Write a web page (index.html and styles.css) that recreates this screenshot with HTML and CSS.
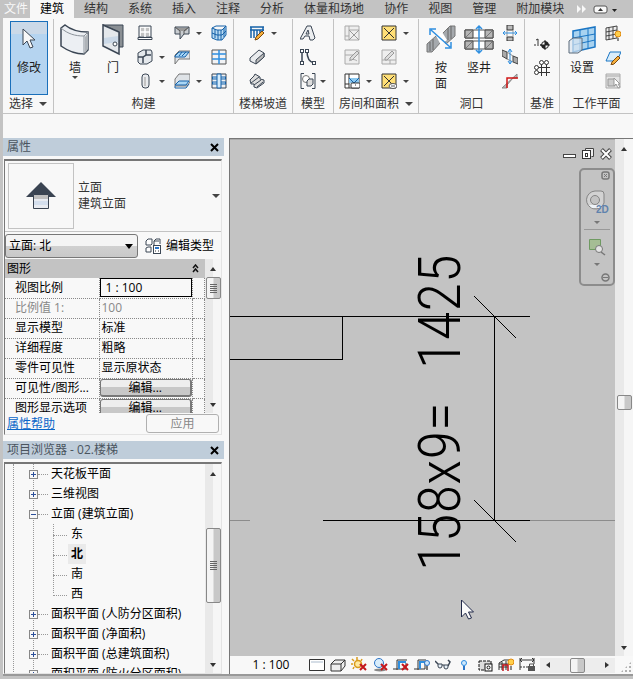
FILE: index.html
```html
<!DOCTYPE html>
<html lang="zh-CN">
<head>
    <meta charset="UTF-8">
    <meta name="viewport" content="width=device-width, initial-scale=1.0">
    <title>02.楼梯 - 立面: 北</title>
    <link rel="stylesheet" href="styles.css">
</head>
<body>
<div class="app">
    <nav class="tabs">
        <button class="tab file">文件</button>
        <button class="tab active">建筑</button>
        <button class="tab">结构</button>
        <button class="tab">系统</button>
        <button class="tab">插入</button>
        <button class="tab">注释</button>
        <button class="tab">分析</button>
        <button class="tab">体量和场地</button>
        <button class="tab">协作</button>
        <button class="tab">视图</button>
        <button class="tab">管理</button>
        <button class="tab">附加模块</button>
        <button class="tab-extra" aria-label="更多选项卡"><svg width="11" height="8"><path d="M1 0l4 4-4 4zM6 0l4 4-4 4z" fill="#f8f8f8"/></svg></button>
        <button class="tab-extra" aria-label="最小化功能区"><svg width="24" height="9"><rect x="1" y="1" width="13" height="7" rx="2" fill="#f8f8f8" stroke="#555"/><path d="M5 6l2.500-3L10 6z" fill="#333"/><path d="M19 4h5l-2.500 3z" fill="#222"/></svg></button>
    </nav>

    <header class="ribbon">
        <section class="panel">
            <div class="tools select-tools">
                <button class="big active">
                    <svg width="16" height="22" viewBox="0 0 16 22"><path d="M2 1v16l4-4 3 7 3-1-3-7h5z" fill="#f8f8f8" stroke="#3b4654"/></svg>
                    <span>修改</span>
                </button>
            </div>
            <h2>选择 <i class="caret large"></i></h2>
        </section>

        <section class="panel">
            <div class="tools">
                <button class="big">
                    <svg width="30" height="32" viewBox="0 0 30 32"><path d="M1 4l4-3c6 5 14 7 23 7v18l-4 4C16 30 8 27 1 22z" fill="#eceff3" stroke="#3b4654" stroke-width="1.500"/><path d="M1 4c7 6 14 8 23 8l4-4M24 12v18" fill="none" stroke="#8b929a"/><path d="M25 13l3-4v16l-3 4z" fill="#aeb3b8"/></svg>
                    <span>墙</span><i class="caret"></i>
                </button>
                <button class="big">
                    <svg width="22" height="32" viewBox="0 0 22 32"><path d="M1 1h20v22h-4V8z" fill="#8a8f94" stroke="#3b4654"/><path d="M1 1l16 7v22L1 22z" fill="#e4e8ec" stroke="#3b4654" stroke-width="1.500"/><path d="M2 14l14-2v6L2 20z" fill="#cbd9e8"/><circle cx="13" cy="20" r="2" fill="#fff" stroke="#3b4654"/></svg>
                    <span>门</span>
                </button>
                <div class="small-grid three">
                    <button aria-label="窗"><svg class="ico" viewBox="0 0 16 16"><path d="M2 1h12v11H2z" fill="#f8f8f8" stroke="#3b4654"/><path d="M4 3h8v8H4z" fill="#c3c3c3"/><path d="M8 2v10M3 7h10" stroke="#fff" stroke-width="1.500"/><path d="M1 12.500h14v2H1z" fill="#fff" stroke="#3b4654"/></svg></button>
                    <button aria-label="屋顶"><svg class="ico" viewBox="0 0 16 16"><path d="M1 2h14v7h-5l-4 5V9H1z" fill="#c9cdd1" stroke="#3b4654"/><path d="M2 3l4 3h6l2-3z" fill="#999"/><path d="M1 2l5 4v3M15 2l-5 4v3" fill="none" stroke="#555"/></svg><i class="caret"></i></button>
                    <button aria-label="幕墙系统"><svg class="ico" viewBox="0 0 16 16"><path d="M1 3l5 2h5l4-4v9l-4 5H6l-5-2z" fill="#b9dbf3" stroke="#1561a8"/><path d="M1 8l5 2h5l4-4M4 4v9M7 5v10M10 5v10M13 3v9M1 3l4-2h10" fill="none" stroke="#1561a8"/></svg></button>
                    <button aria-label="构件"><svg class="ico" viewBox="0 0 16 16"><path d="M1 4l5-3h8l1 2v9l-5 3H3l-2-2z" fill="#e4e8ec" stroke="#3b4654"/><path d="M1 8h5l3-2V1M6 8v6M9 6h5" fill="none" stroke="#3b4654" stroke-width="1.500"/></svg><i class="caret"></i></button>
                    <button aria-label="天花板"><svg class="ico" viewBox="0 0 16 16"><path d="M1 15V6l4-4h11v8H5z" fill="#dfe3e7" stroke="#777"/><path d="M1 7l4-4h10l-4 5H1z" fill="#a9d6f5" stroke="#1561a8"/><path d="M5 7l3-4M8 7l4-4" stroke="#1561a8"/></svg></button>
                    <button aria-label="幕墙网格"><svg class="ico" viewBox="0 0 16 16"><path d="M1 1h14v14H1z" fill="#f2f3f5" stroke="#555"/><path d="M8 1v14M1 5h14M1 10h14" stroke="#2f8fe0" stroke-width="1.500"/></svg></button>
                    <button aria-label="柱"><svg class="ico" viewBox="0 0 16 16"><rect x="5" y="1" width="7" height="14" rx="3" fill="#e9ebee" stroke="#3b4654"/><path d="M8 4v9" stroke="#c3c3c3" stroke-width="2"/></svg><i class="caret"></i></button>
                    <button aria-label="楼板"><svg class="ico" viewBox="0 0 16 16"><path d="M1 12V6l4-5h11v8l-3 4H1z" fill="#dfe3e7" stroke="#777"/><path d="M1 12l4-4h10l-3 4z" fill="#a9d6f5" stroke="#1561a8"/><path d="M1 13v2h11l3-4" fill="none" stroke="#1561a8"/></svg><i class="caret"></i></button>
                    <button aria-label="竖梃"><svg class="ico" viewBox="0 0 16 16"><path d="M1 1h14v14H1z" fill="#f2f3f5" stroke="#3b4654"/><path d="M1 5h14M1 10h14" stroke="#1561a8" stroke-width="3"/><path d="M2 5h12M2 10h12" stroke="#d6ecfb"/><path d="M6 1h4v14H6z" fill="#d6ecfb" stroke="#1561a8"/></svg></button>
                </div>
            </div>
            <h2>构建</h2>
        </section>

        <section class="panel">
            <div class="tools indent">
                <div class="small-grid one">
                    <button aria-label="栏杆扶手"><svg class="ico" viewBox="0 0 16 16"><path d="M1 2h14M1 5h14M2 2v11M5 5v8M8 5v8M11 5v5M14 2v4" stroke="#1561a8" stroke-width="1.500"/><path d="M7 12l6-6 2 2-6 6-3 1z" fill="#f6b03c" stroke="#7a4a12"/></svg><i class="caret"></i></button>
                    <button aria-label="坡道"><svg class="ico" viewBox="0 0 16 16"><path d="M1 9l9-8 5 3v4l-8 7-6-3z" fill="#e9ebee" stroke="#3b4654"/><path d="M15 4l-8 7v4l8-7z" fill="#bbb" stroke="#3b4654"/></svg></button>
                    <button aria-label="楼梯"><svg class="ico" viewBox="0 0 16 16"><path d="M1 7l4-4 1-2 5 3v2l4 1v3l-7 5-3-1V11H2z" fill="#ddd" stroke="#3b4654"/><path d="M2 10l8-6M5 12l7-5M8 14l6-5" stroke="#3b4654"/></svg></button>
                </div>
            </div>
            <h2>楼梯坡道</h2>
        </section>

        <section class="panel">
            <div class="tools near">
                <div class="small-grid one">
                    <button aria-label="模型文字"><svg class="ico" viewBox="0 0 16 16"><path d="M0 14L7 1h4l4 12-2 2h-3l-1-4H5l-2 3zM6 9h3L8 5z" fill="#eceef0" stroke="#3b4654"/></svg></button>
                    <button aria-label="模型线"><svg class="ico" viewBox="0 0 16 16"><path d="M2 2v12M7 2c0 7 2 11 7 12" fill="none" stroke="#3b4654" stroke-width="1.500"/><path d="M0 0h4v4H0zM0 12h4v4H0zM5 0h4v4H5zM12 12h4v4h-4z" fill="#3b4654"/><path d="M1 1h2v2H1zM1 13h2v2H1zM6 1h2v2H6zM13 13h2v2h-2z" fill="#fff"/></svg></button>
                    <button class="tight" aria-label="模型组"><svg class="ico" viewBox="0 0 16 16"><path d="M4 .5H1v15h3M12 .5h3v15h-3" fill="none" stroke="#3b4654"/><circle cx="6" cy="6" r="3.500" fill="#fff" stroke="#777"/><path d="M7 8l2-2h4v5l-2 2H7z" fill="#ddd" stroke="#3b4654"/></svg><i class="caret"></i></button>
                </div>
            </div>
            <h2>模型</h2>
        </section>

        <section class="panel">
            <div class="tools rooms">
                <div class="small-grid two">
                    <button aria-label="房间"><svg class="ico" viewBox="0 0 16 16"><path d="M1 1h14v14H1zM5 1v14M1 11h4M5 5h10" fill="#eee" stroke="#aaa"/><path d="M5 5l10 10M15 5L5 15" stroke="#999"/></svg></button>
                    <button aria-label="面积"><svg class="ico" viewBox="0 0 16 16"><path d="M1 1h14v14H1z" fill="#ffdf76" stroke="#333"/><path d="M3 3l10 10M13 3L3 13" fill="none" stroke="#333"/></svg><i class="caret"></i></button>
                    <button aria-label="房间分隔"><svg class="ico" viewBox="0 0 16 16"><path d="M1 1h14v14H1zM1 6h8M5 12c2-2 6-2 8 0" fill="#eee" stroke="#aaa"/><path d="M6 9l7-7 2 2-7 7H6z" fill="#ddd" stroke="#999"/></svg></button>
                    <button aria-label="面积边界"><svg class="ico" viewBox="0 0 16 16"><path d="M1 1h14v14H1zM1 11h14M9 11v4" fill="#eee" stroke="#aaa"/><path d="M4 9l7-7 2 2-7 7H4z" fill="#ddd" stroke="#999"/></svg></button>
                    <button aria-label="标记房间"><svg class="ico" viewBox="0 0 16 16"><path d="M1 1h14v14H1zM5 1v14M1 11h4" fill="#fff" stroke="#333"/><path d="M5 5h10v5H5z" fill="#8cc8ee"/><path d="M5 5l5 5 5-5" stroke="#1561a8" fill="none"/><rect x="7" y="10" width="9" height="5" rx="1" fill="#fff" stroke="#333"/><path d="M11 12h1" stroke="#333"/></svg><i class="caret"></i></button>
                    <button aria-label="标记面积"><svg class="ico" viewBox="0 0 16 16"><path d="M1 1h14v14H1z" fill="#ffdf76" stroke="#333"/><path d="M3 3l10 10M13 3L3 13" fill="none" stroke="#333"/><ellipse cx="12" cy="13" rx="4" ry="2.500" fill="#fff" stroke="#555"/><path d="M10 13h4" stroke="#555"/></svg><i class="caret"></i></button>
                </div>
            </div>
            <h2>房间和面积 <i class="caret large"></i></h2>
        </section>

        <section class="panel">
            <div class="tools openings">
                <button class="big">
                    <svg width="30" height="32" viewBox="0 0 30 32"><path d="M16 10l8-8h5v10l-9 8z" fill="#a5a9ad" stroke="#777"/><path d="M1 20l9-8 5 6-9 10H1z" fill="#a5a9ad" stroke="#777"/><path d="M22 4v12M25 2v13M4 18v9M7 15v11" stroke="#666"/><path d="M10 12l6-4 5 8-6 5z" fill="#fff"/><path d="M5 6l19 17M4 11V5h6M19 24h6v-6" fill="none" stroke="#2f8fe0" stroke-width="1.500"/></svg>
                    <span>按<br>面</span>
                </button>
                <button class="big">
                    <svg width="30" height="32" viewBox="0 0 30 32"><path d="M1 6h28v8H1zM1 17h28v8H1z" fill="#fff" stroke="#555"/><path d="M1 6h8v8H1zM21 6h8v8h-8zM1 17h8v8H1zM21 17h8v8h-8z" fill="#b5b5b5" stroke="#444"/><path d="M2 13l6-6M22 13l6-6M2 24l6-6M22 24l6-6" stroke="#777"/><path d="M15 2v27M12 5l3-3 3 3M12 26l3 3 3-3" fill="none" stroke="#2f8fe0" stroke-width="1.500"/></svg>
                    <span>竖井</span>
                </button>
                <div class="small-grid one">
                    <button aria-label="墙洞口"><svg class="ico" viewBox="0 0 16 16"><path d="M5 0h6v5H5zM5 12h6v4H5z" fill="#bbb" stroke="#333"/><path d="M5 5v7M11 5v7" stroke="#999"/><path d="M1 8h14M3 6L1 8l2 2M13 6l2 2-2 2" fill="none" stroke="#2f8fe0"/></svg></button>
                    <button aria-label="垂直洞口"><svg class="ico" viewBox="0 0 16 16"><path d="M0 1l5 2v7L0 7zM11 7l5 2v6l-5-2z" fill="#aaa" stroke="#444"/><path d="M5 3l6 4M5 10l6 3" stroke="#888"/><path d="M8 0v15M6 3l2-3 2 3M6 12l2 3 2-3" fill="none" stroke="#2f8fe0"/></svg></button>
                    <button aria-label="老虎窗"><svg class="ico" viewBox="0 0 16 16"><path d="M0 15L15 1v4h-4L5 12v3z" fill="#bbb" stroke="#888"/><path d="M5 15V5h11" fill="none" stroke="#d01616" stroke-width="1.500"/></svg></button>
                </div>
            </div>
            <h2>洞口</h2>
        </section>

        <section class="panel">
            <div class="tools datum">
                <button aria-label="标高"><svg class="ico" viewBox="0 0 16 16"><path d="M0 10h7" stroke="#333" stroke-dasharray="2 1"/><path d="M2 5l2-1v5" fill="none" stroke="#333"/><circle cx="11" cy="10" r="3.500" fill="#fff" stroke="#222"/><path d="M11 6.500A3.500 3.500 0 0 1 14.500 10H11zM11 13.500A3.500 3.500 0 0 1 7.500 10H11z" fill="#222"/><path d="M11 5v10M6 10h10" stroke="#222"/></svg></button>
                <button aria-label="轴网"><svg class="ico" viewBox="0 0 16 16"><path d="M7.500 4v12M12.500 4v12M4 7.500h12M4 12.500h12" stroke="#333"/><g fill="#fff" stroke="#333"><circle cx="7.500" cy="2.500" r="2"/><circle cx="12.500" cy="2.500" r="2"/><circle cx="2.500" cy="7.500" r="2"/><circle cx="2.500" cy="12.500" r="2"/></g></svg></button>
            </div>
            <h2>基准</h2>
        </section>

        <section class="panel">
            <div class="tools workplane">
                <button class="big">
                    <svg width="28" height="32" viewBox="0 0 28 32"><path d="M5 7l22-4v20L5 28z" fill="#a9d3f0" stroke="#1b76c4" stroke-width="1.500"/><path d="M12 6v21M20 5v20M5 14l22-4M5 21l22-5" stroke="#1b76c4"/><path d="M1 17l4-3h9v12l-4 3H1z" fill="#dbe6f0" fill-opacity=".7" stroke="#5a6a7a"/></svg>
                    <span>设置</span>
                </button>
                <div class="small-grid one">
                    <button aria-label="显示"><svg class="ico" viewBox="0 0 16 16"><path d="M1 3l11-2v12L1 15zM4 3v12M8 2v12M1 7l11-2M1 11l11-2" fill="#eee" stroke="#444"/><circle cx="13" cy="9" r="3" fill="#ffcf4a" stroke="#e08a10"/><path d="M12 13h2v3h-2z" fill="#888"/></svg></button>
                    <button aria-label="参照平面"><svg class="ico" viewBox="0 0 16 16"><path d="M1 12L5 3h11l-4 9z" fill="#d9edfb" stroke="#1b76c4"/><path d="M7 13l6-6 2 2-6 6-3 1z" fill="#f6b03c" stroke="#7a4a12"/></svg></button>
                    <button aria-label="查看器"><svg class="ico" viewBox="0 0 16 16"><path d="M1 1h14v14H1zM1 3h14" fill="#e4e4e4" stroke="#aaa"/><path d="M3 6h7v7H3z" fill="#ccc" stroke="#999"/><path d="M9 5v8l2-2 2 4 2-1-2-3h2z" fill="#fff" stroke="#999"/></svg></button>
                </div>
            </div>
            <h2>工作平面</h2>
        </section>
    </header>

    <div class="options-bar"></div>

    <main class="workspace">
        <aside class="docks">
            <section class="dock">
                <div class="dock-title"><h3>属性</h3><button class="close" aria-label="关闭属性"><svg width="9" height="9"><path d="M1 1l7 7M8 1L1 8" stroke="#000" stroke-width="2"/></svg></button></div>
                <div class="dock-body">
                    <button class="type-selector">
                        <span class="preview"><svg width="32" height="30" viewBox="0 0 32 30"><path d="M1 16L16 1l15 15z" fill="#3a4452"/><path d="M8.500 13.500h15v14h-15z" fill="#e9ecf2" stroke="#3a4452"/><path d="M9 14h14v4H9z" fill="#bfbfbf"/><path d="M9 20h14v4H9z" fill="#d4dfee"/></svg></span>
                        <span class="type-name">立面<br>建筑立面</span>
                        <i class="caret large"></i>
                    </button>
                    <div class="instance">
                        <div class="select">
                            <select aria-label="实例"><option>立面: 北</option></select>
                        </div>
                        <button class="edit-type"><svg class="ico" viewBox="0 0 16 16"><path d="M1 3l2-2h4v5L6 7H1zM9 3l2-2h4v5M9 3h5M1 10l2-1h3v5H1zM9 3v4" fill="#fff" stroke="#3b4654"/><rect x="8.500" y="7.500" width="7" height="8" fill="#fff" stroke="#3b4654"/><path d="M10 9h4v2h-4z" fill="#2b74c7"/><path d="M10 13h1M13 13h1" stroke="#333"/></svg>编辑类型</button>
                    </div>
                    <div class="grid-wrap">
                        <div class="grid-scroll">
                            <table class="props">
                                <colgroup><col class="name"><col><col class="link"></colgroup>
                                <thead><tr><th colspan="3"><div>图形<svg width="7" height="9"><path d="M1 4l2.500-3L6 4M1 8l2.500-3L6 8" fill="none" stroke="#111" stroke-width="1.500"/></svg></div></th></tr></thead>
                                <tbody>
                                    <tr><td>视图比例</td><td class="field"><input value="1 : 100" aria-label="视图比例"></td><td></td></tr>
                                    <tr class="muted"><td>比例值 1:</td><td>100</td><td></td></tr>
                                    <tr><td>显示模型</td><td>标准</td><td></td></tr>
                                    <tr><td>详细程度</td><td>粗略</td><td></td></tr>
                                    <tr><td>零件可见性</td><td>显示原状态</td><td></td></tr>
                                    <tr><td>可见性/图形...</td><td class="field"><button>编辑...</button></td><td></td></tr>
                                    <tr><td>图形显示选项</td><td class="field"><button>编辑...</button></td><td></td></tr>
                                </tbody>
                            </table>
                        </div>
                        <div class="scrollbar">
                            <i class="arrow up"></i>
                            <span class="thumb short"></span>
                            <i class="arrow down"></i>
                        </div>
                    </div>
                    <div class="dock-footer">
                        <a href="#help">属性帮助</a>
                        <button disabled>应用</button>
                    </div>
                </div>
            </section>

            <section class="dock">
                <div class="dock-title"><h3>项目浏览器 - 02.楼梯</h3><button class="close" aria-label="关闭项目浏览器"><svg width="9" height="9"><path d="M1 1l7 7M8 1L1 8" stroke="#000" stroke-width="2"/></svg></button></div>
                <div class="dock-body browser">
                    <div class="tree-scroll">
                        <ul class="tree">
                            <li><button class="toggle plus" aria-label="展开"></button>天花板平面</li>
                            <li><button class="toggle plus" aria-label="展开"></button>三维视图</li>
                            <li><button class="toggle" aria-label="折叠"></button>立面 (建筑立面)
                                <ul>
                                    <li>东</li>
                                    <li><b>北</b></li>
                                    <li>南</li>
                                    <li>西</li>
                                </ul>
                            </li>
                            <li><button class="toggle plus" aria-label="展开"></button>面积平面 (人防分区面积)</li>
                            <li><button class="toggle plus" aria-label="展开"></button>面积平面 (净面积)</li>
                            <li><button class="toggle plus" aria-label="展开"></button>面积平面 (总建筑面积)</li>
                            <li><button class="toggle plus" aria-label="展开"></button>面积平面 (防火分区面积)</li>
                        </ul>
                    </div>
                    <div class="scrollbar">
                        <i class="arrow up"></i>
                        <span class="thumb long"></span>
                        <i class="arrow down"></i>
                    </div>
                </div>
            </section>
        </aside>

        <section class="view">
            <div class="canvas">
                <svg class="drawing">
                    <g class="dim-text">
                        <text transform="translate(230 431) rotate(-90)">158x9=</text>
                        <text transform="translate(230 229) rotate(-90)">1425</text>
                    </g>
                    <g class="level">
                        <path d="M0 380.500h20M300 380.500h2000"/>
                    </g>
                    <g class="lines">
                        <path d="M0 176.500h300M93 380.500h207M264.500 176v204M0 219.500h112.500v-43"/>
                        <path d="M244 156l42 42M244 360l42 42"/>
                    </g>
                    <path d="M231.500 460v17l4-4 3 6 3-1-3-6h5z" fill="#fafafa" stroke="#222a4a"/>
                </svg>
                <div class="window-buttons">
                    <button aria-label="最小化"><svg width="13" height="12"><rect x=".5" y="6.500" width="12" height="3" fill="#fff" stroke="#444"/></svg></button>
                    <button aria-label="还原"><svg width="12" height="12"><path d="M3.500 2.500v-2h8v8h-2" fill="#eee" stroke="#444"/><rect x=".5" y="2.500" width="8" height="8" fill="#fff" stroke="#333"/><rect x="3.500" y="5.500" width="2" height="3" fill="#fff" stroke="#333"/></svg></button>
                    <button aria-label="关闭视图"><svg width="12" height="12"><path d="M1.500 1.500l9 9M10.500 1.500l-9 9" stroke="#444" stroke-width="4"/><path d="M2 2l8 8M10 2l-8 8" stroke="#fff" stroke-width="2"/></svg></button>
                </div>
                <div class="nav-bar">
                    <button class="corner" aria-label="关闭导航栏"><svg width="9" height="9"><rect x="1" y="1" width="7" height="7" rx="2" fill="none" stroke="#777" stroke-width="1.500"/><path d="M3 3l3 3M6 3L3 6" stroke="#777"/></svg></button>
                    <button aria-label="二维控制盘"><svg width="24" height="24" viewBox="0 0 24 24"><path d="M10 1h6q3 0 3 3v9a9 9 0 1 1-9-12z" fill="#d2d2d2" stroke="#848484"/><circle cx="10" cy="10" r="4.500" fill="#c3c3c3" stroke="#848484"/><path d="M4 15h12v3H7z" fill="#eef3f8"/><text x="11" y="23">2D</text></svg></button>
                    <i class="caret"></i>
                    <hr>
                    <button aria-label="区域放大"><svg width="18" height="18" viewBox="0 0 18 18"><path d="M1.500 1.500h11v10h-11z" fill="#a5bd94" stroke="#6f9a62"/><circle cx="11" cy="11" r="3.500" fill="#e3e3e3" stroke="#777"/><path d="M13 14l4 3" stroke="#777" stroke-width="1.500"/></svg></button>
                    <i class="caret"></i>
                    <button class="corner last" aria-label="导航栏选项"><svg width="9" height="9"><circle cx="4.500" cy="4.500" r="3.500" fill="none" stroke="#777" stroke-width="1.500"/><path d="M2 4.500h5" stroke="#777"/></svg></button>
                </div>
            </div>
            <div class="scrollbar view-scroll">
                <i class="arrow up"></i>
                <span class="thumb square"></span>
                <i class="arrow down"></i>
            </div>
            <div class="view-bar">
                <button class="scale">1 : 100</button>
                <button aria-label="详细程度"><svg class="ico" viewBox="0 0 16 16"><path d="M.5 2.500h15v11H.5z" fill="#fff" stroke="#333"/><path d="M2 4h12v2H2z" fill="#d5dde6"/></svg></button>
                <button aria-label="视觉样式"><svg class="ico" viewBox="0 0 16 16"><path d="M1 7l4-4h10v6l-4 5H1z" fill="#eee" stroke="#333"/><path d="M1 7h10v7M11 7l4-4" fill="none" stroke="#333"/></svg></button>
                <button aria-label="关闭日光路径"><svg class="ico" viewBox="0 0 16 16"><path d="M6 0v3M1 2l2 2M0 7h2M2 12l1-2M11 2l-1 2" stroke="#d99a1c" stroke-width="1.500"/><circle cx="7" cy="7" r="3.500" fill="#ffeaa0" stroke="#d99a1c" stroke-width="1.500"/><path d="M9 7l6 6M15 7l-6 6" stroke="#c4161c" stroke-width="2"/></svg></button>
                <button aria-label="关闭阴影"><svg class="ico" viewBox="0 0 16 16"><ellipse cx="8" cy="13" rx="6" ry="1.500" fill="#888"/><circle cx="7" cy="6" r="4.500" fill="#d9edfb" stroke="#2b74c7"/><path d="M9 7l6 6M15 7l-6 6" stroke="#c4161c" stroke-width="2"/></svg></button>
                <button aria-label="裁剪视图"><svg class="ico" viewBox="0 0 16 16"><path d="M4 13V3h10M0 12h13V6" fill="none" stroke="#333"/><path d="M6 12V5h7" fill="none" stroke="#2f8fe0" stroke-width="2"/><path d="M9 7l6 6M15 7l-6 6" stroke="#c4161c" stroke-width="2"/></svg></button>
                <button aria-label="显示裁剪区域"><svg class="ico" viewBox="0 0 16 16"><path d="M4 13V3h8M0 12h11V6" fill="none" stroke="#333"/><path d="M6 12V5h5" fill="none" stroke="#2f8fe0" stroke-width="2"/><circle cx="13" cy="6" r="2.500" fill="#cfe8fb" stroke="#2b74c7"/><path d="M12 9h2v4h-2z" fill="#777"/></svg></button>
                <button aria-label="临时隐藏"><svg class="ico" viewBox="0 0 16 16"><path d="M0 4l3 3M13 3l2 2-2 4" fill="none" stroke="#3b4654" stroke-width="1.500"/><path d="M3 7h4v2a2 2 0 0 1-4 0zM9 8h4v2a2 2 0 0 1-4 0zM7 8h2" fill="#e9f1f8" stroke="#3b4654"/></svg></button>
                <button aria-label="显示隐藏的图元"><svg class="ico" viewBox="0 0 16 16"><circle cx="8" cy="6" r="2.500" fill="#cfe8fb" stroke="#2b8be0"/><path d="M7 9h2v4H7z" fill="#2b74c7"/></svg></button>
                <button aria-label="临时视图属性"><svg class="ico" viewBox="0 0 16 16"><path d="M2 4h12v9H2z" fill="#ddd" stroke="#111" stroke-dasharray="3 1"/><rect x="8" y="7" width="7" height="7" fill="#fff" stroke="#111"/><circle cx="11.500" cy="10.500" r="1.500" fill="none" stroke="#111"/></svg></button>
                <button aria-label="显示分析模型"><svg class="ico" viewBox="0 0 16 16"><path d="M1 13V6l5-3h5M4 13V5M8 13V4M1 7h10M1 10h9" fill="none" stroke="#333"/><path d="M5 14V8h5v6" fill="none" stroke="#c4161c" stroke-width="1.500"/><circle cx="13" cy="5" r="3" fill="#ffcf4a" stroke="#e08a10"/><path d="M12 9h2v4h-2z" fill="#888"/></svg></button>
                <button aria-label="显示约束"><svg class="ico" viewBox="0 0 16 16"><path d="M1 1v12M15 1v6M1 3h14M3 1L1 3l2 2M13 1l2 2-2 2" fill="none" stroke="#333"/><path d="M1 10h8" stroke="#333" stroke-dasharray="2 1"/><rect x="9" y="9" width="7" height="5" fill="#555"/><path d="M10.500 9V7h4v2" fill="none" stroke="#555"/></svg></button>
                <div class="h-scroll">
                    <i class="arrow left"></i>
                    <span class="thumb square"></span>
                    <i class="arrow right"></i>
                </div>
            </div>
            <div class="grip"></div>
        </section>
    </main>
</div>
</body>
</html>
```

FILE: styles.css
```css
:root {
    --gray: #c3c3c3;
    --light: #f8f8f8;
    --title: #bfcdda;
    --line: #c3c3c3;
    --dark: #777;
    --text: #1e1e1e;
}

* {
    box-sizing: border-box;
}

body {
    margin: 0;
    background: var(--gray);
    color: var(--text);
    font-family: "Open Sans", "Noto Sans CJK SC", sans-serif;
    font-size: 12px;
    line-height: 16px;
}

button, input, select {
    font: inherit;
    color: inherit;
}

button {
    margin: 0;
    padding: 0;
    border: none;
    background: none;
    white-space: nowrap;
}

svg {
    display: block;
    flex: none;
}

h2, h3 {
    margin: 0;
    font-size: 12px;
    font-weight: normal;
}

.ico {
    width: 16px;
    height: 16px;
}

.app {
    display: flex;
    flex-direction: column;
    height: 100vh;
    padding-bottom: 3px;
    overflow: hidden;
}

/* tabs */
.tabs {
    display: flex;
    align-items: stretch;
    flex: none;
    height: 18px;
    padding-left: 2px;
    overflow: hidden;
}

.tab {
    flex: none;
    padding: 0 10px;
    color: #333;
}

.tab.file {
    padding: 0 2px;
    color: var(--light);
}

.tab.active {
    background: var(--light);
    color: #000;
}

.tab-extra {
    display: flex;
    align-items: center;
    margin: 0 4px 0 2px;
}

/* ribbon */
.ribbon {
    display: grid;
    grid-template-columns: 51px 180px 59px 41px 85px 106px 35px 1fr;
    flex: none;
    margin-left: 3px;
    background: var(--light);
    border-bottom: 1px solid var(--line);
}

.panel {
    display: flex;
    flex-direction: column;
    margin-top: 1px;
    border-right: 1px solid var(--line);
}

.panel:last-child {
    border-right: none;
}

.panel h2 {
    display: flex;
    justify-content: center;
    align-items: center;
    gap: 6px;
    height: 18px;
    color: #333;
    white-space: nowrap;
}

.tools {
    display: flex;
    height: 76px;
    padding: 2px 0 0 2px;
}

.tools.select-tools {
    padding-left: 7px;
}

.tools.indent {
    padding-left: 15px;
}

.tools.near {
    padding-left: 7px;
}

.tools.rooms {
    padding-left: 10px;
}

.tools.openings {
    padding-left: 3px;
}

.tools.workplane {
    padding-left: 3px;
}

.big {
    display: flex;
    flex-direction: column;
    align-items: center;
    flex: none;
    width: 38px;
    padding-top: 3px;
}

.big svg {
    margin-bottom: 4px;
}

.big.active {
    padding-top: 6px;
    border: 1px solid #1a6fba;
    background: linear-gradient(#cbd9e8 12px, #b5d4f0 12px);
}

.big.active svg {
    margin-bottom: 10px;
}

.caret {
    flex: none;
    width: 0;
    border: 3px solid transparent;
    border-top-color: #444;
    border-bottom: none;
}

.caret.large {
    border-width: 4px;
    border-bottom: none;
}

.small-grid {
    display: grid;
    grid-auto-rows: 24px;
}

.small-grid.three {
    grid-template-columns: 37px 37px 16px;
    margin-left: 5px;
}

.small-grid.two {
    grid-template-columns: 37px 37px;
}

.small-grid button {
    display: flex;
    align-items: center;
    gap: 6px;
}

.small-grid button.tight {
    gap: 4px;
}

.openings .small-grid, .workplane .small-grid {
    margin-left: 4px;
}

.tools.datum {
    flex-direction: column;
    gap: 9px;
    padding: 16px 0 0 9px;
}

.datum button {
    width: 16px;
}

.options-bar {
    flex: none;
    height: 24px;
    margin-left: 3px;
    background: var(--light);
}

/* docked palettes */
.workspace {
    display: grid;
    grid-template-columns: 221px minmax(0, 1fr);
    column-gap: 5px;
    flex: 1;
    min-height: 0;
    margin-left: 3px;
    background: var(--light);
    border-bottom: 2px solid #999;
}

.docks {
    display: grid;
    grid-template-rows: minmax(0, 298fr) minmax(0, 233fr);
    row-gap: 6px;
    min-height: 0;
}

.dock {
    display: flex;
    flex-direction: column;
    min-height: 0;
}

.dock-title {
    display: flex;
    justify-content: space-between;
    align-items: center;
    flex: none;
    height: 18px;
    margin-bottom: 3px;
    padding: 0 5px 0 4px;
    background: var(--title);
}

.dock-title h3 {
    color: #4a545e;
}

.dock-body {
    display: flex;
    flex-direction: column;
    flex: 1;
    min-height: 0;
    margin: 0 2px 0 1px;
    border-top: 2px solid var(--dark);
    border-left: 1px solid var(--dark);
    border-right: 1px solid #e4e4e4;
    border-bottom: 1px solid #e4e4e4;
}

.type-selector {
    display: flex;
    align-items: center;
    flex: none;
    padding: 2px 1px 2px 3px;
    border-bottom: 1px solid var(--line);
    text-align: left;
}

.preview {
    display: flex;
    justify-content: center;
    align-items: center;
    width: 66px;
    height: 66px;
    border: 1px solid var(--line);
}

.type-name {
    flex: 1;
    margin-left: 4px;
    color: #333;
}

.instance {
    display: flex;
    align-items: center;
    gap: 7px;
    flex: none;
    height: 27px;
}

.select {
    position: relative;
    width: 133px;
}

.select::after {
    content: "";
    position: absolute;
    top: 10px;
    right: 5px;
    border: 4px solid transparent;
    border-top: 5px solid #000;
    border-bottom: none;
    pointer-events: none;
}

.select select {
    width: 100%;
    height: 24px;
    padding: 0 3px;
    appearance: none;
    border: 1px solid #777;
    border-radius: 3px;
    background: linear-gradient(#f4f4f4 50%, #d0d0d0 50%, #c8c8c8);
    color: #000;
}

.edit-type {
    display: flex;
    align-items: center;
    gap: 5px;
    color: #000;
}

.grid-wrap, .browser {
    display: flex;
    flex-direction: row;
    flex: 1;
    min-height: 0;
}

.grid-scroll, .tree-scroll {
    flex: 1;
    min-width: 0;
    overflow: hidden;
}

.props {
    width: 100%;
    border-collapse: collapse;
    table-layout: fixed;
    color: #000;
}

.props .name {
    width: 94px;
}

.props .link {
    width: 12px;
}

.props th {
    height: 19px;
    padding: 0 6px 0 2px;
    background: var(--gray);
    font-weight: normal;
}

.props th div {
    display: flex;
    justify-content: space-between;
    align-items: center;
}

.props td {
    height: 20px;
    padding: 0 2px;
    border-bottom: 1px dotted #888;
    border-right: 1px dotted #888;
    white-space: nowrap;
}

.props td:first-child {
    padding-left: 10px;
}

.props td:last-child {
    padding: 0;
}

.props .muted {
    color: #888;
}

.props .field {
    padding: 0;
}

.props input {
    display: block;
    width: 100%;
    height: 19px;
    padding: 0 5px;
    border: 1px solid #000;
    background: var(--light);
}

.props button {
    display: block;
    width: 100%;
    height: 18px;
    border: 1px solid #777;
    border-right-width: 2px;
    border-bottom-width: 2px;
    border-radius: 3px;
    background: linear-gradient(#eee 45%, #c8c8c8 45%);
    line-height: 14px;
}

.dock-footer {
    display: flex;
    justify-content: space-between;
    align-items: center;
    flex: none;
    height: 21px;
    padding: 0 2px;
}

.dock-footer a {
    color: #0a66c8;
}

.dock-footer button {
    width: 73px;
    height: 19px;
    border: 1px solid #b0b0b0;
    border-radius: 3px;
    color: #888;
}

/* scrollbars */
.scrollbar {
    display: flex;
    flex-direction: column;
    align-items: center;
    flex: none;
    width: 16px;
    background: linear-gradient(90deg, #e9e9e9 50%, #f6f6f6 50%);
}

.arrow {
    flex: none;
    width: 0;
    border: 3px solid transparent;
}

.arrow.up {
    margin: 8px 0;
    border-top: none;
    border-bottom: 4px solid #333;
}

.arrow.down {
    margin: auto 0 6px;
    border-bottom: none;
    border-top: 4px solid #333;
}

.arrow.left {
    border-left: none;
    border-right: 4px solid #333;
}

.arrow.right {
    border-right: none;
    border-left: 4px solid #333;
}

.thumb {
    display: flex;
    justify-content: center;
    align-items: center;
    flex: none;
    width: 15px;
    border: 1px solid #888;
    border-radius: 2px;
    background: linear-gradient(90deg, #f4f4f4 45%, #c8c8c8 55%);
}

.thumb.short {
    height: 22px;
    margin-top: -2px;
}

.thumb.long {
    height: 75px;
    margin-top: 44px;
}

.thumb.short::after, .thumb.long::after {
    content: "";
    width: 7px;
    height: 9px;
    background: repeating-linear-gradient(#666 0 1px, transparent 1px 2px);
}

.thumb.square {
    height: 15px;
}

/* project browser */
.tree, .tree ul {
    margin: 0;
    padding: 0;
    list-style: none;
    line-height: 20px;
    color: #000;
    white-space: nowrap;
}

.tree {
    margin-left: 8px;
    padding-left: 15px;
    border-left: 1px dotted #999;
}

.tree > li {
    background: repeating-linear-gradient(#999 0 1px, transparent 1px 2px) 4px 0 / 1px 100% no-repeat;
}

.toggle {
    width: 9px;
    height: 9px;
    margin-right: 13px;
    border: 1px solid #888;
    background: linear-gradient(#2b4f9a, #2b4f9a) center / 5px 1px no-repeat var(--light);
}

.toggle.plus {
    background: linear-gradient(#2b4f9a, #2b4f9a) center / 5px 1px no-repeat,
        linear-gradient(#2b4f9a, #2b4f9a) center / 1px 5px no-repeat var(--light);
}

.toggle::after {
    content: "";
    display: block;
    width: 10px;
    margin-left: 8px;
    border-top: 1px dotted #999;
}

.tree ul li {
    margin-left: 24px;
    background: repeating-linear-gradient(#999 0 1px, transparent 1px 2px) 0 0 / 1px 100% no-repeat;
}

.tree ul li:last-child {
    background-size: 1px 50%;
}

.tree ul li::before {
    content: "";
    display: inline-block;
    width: 14px;
    margin-right: 4px;
    border-top: 1px dotted #999;
    vertical-align: middle;
}

.tree b {
    display: inline-block;
    margin-left: -3px;
    padding: 0 3px;
    background: #eaeaea;
}

/* drawing view */
.view {
    display: grid;
    grid-template-columns: minmax(0, 1fr) 18px;
    grid-template-rows: minmax(0, 1fr) 18px;
    min-height: 0;
    border-top: 1px solid var(--dark);
    border-left: 1px solid var(--dark);
}

.canvas {
    position: relative;
    overflow: hidden;
    background: var(--gray);
    border-top: 1px solid #aaa;
}

.drawing {
    width: 100%;
    height: 100%;
}

.lines {
    fill: none;
    stroke: #000;
    shape-rendering: crispEdges;
}

.level {
    fill: none;
    stroke: #8c8c8c;
    shape-rendering: crispEdges;
}

.dim-text {
    font-family: "Roboto Condensed", "Noto Sans CJK SC", sans-serif;
    font-size: 59px;
    font-weight: 300;
    fill: #000;
}

.window-buttons {
    position: absolute;
    top: 8px;
    right: 3px;
    display: flex;
    gap: 6px;
}

.nav-bar {
    position: absolute;
    top: 28px;
    right: 0;
    display: flex;
    flex-direction: column;
    align-items: center;
    width: 36px;
    height: 118px;
    padding: 1px 3px;
    border: 2px solid #8c8c8c;
    border-radius: 5px;
}

.nav-bar .corner {
    align-self: flex-end;
    margin-bottom: 10px;
}

.nav-bar .corner.last {
    margin: auto 0 1px;
}

.nav-bar .caret {
    margin-top: 7px;
    border-top-color: #777;
}

.nav-bar hr {
    width: 100%;
    margin: 5px 0 8px;
    border: none;
    border-top: 1px solid #999;
}

.nav-bar text {
    font-family: "Liberation Sans", sans-serif;
    font-size: 10px;
    font-weight: bold;
    fill: #5f82ad;
}

.view-scroll {
    width: auto;
}

.view-scroll .thumb {
    margin: auto 0;
}

.view-scroll .arrow.down {
    margin-top: 0;
}

.view-bar {
    display: flex;
    align-items: center;
    gap: 5px;
    background: var(--light);
}

.scale {
    width: 74px;
    padding-left: 8px;
    color: #000;
}

.h-scroll {
    display: flex;
    align-items: center;
    justify-content: space-between;
    flex: 1;
    padding: 0 6px;
    background: #ededed;
}

.grip {
    align-self: end;
    justify-self: end;
    width: 10px;
    height: 10px;
    margin: 2px;
    background: conic-gradient(from 270deg at 2px 2px, #b0b0b0 90deg, transparent 0) 0 0 / 4px 4px;
    clip-path: polygon(100% 0, 100% 100%, 0 100%);
}
```
